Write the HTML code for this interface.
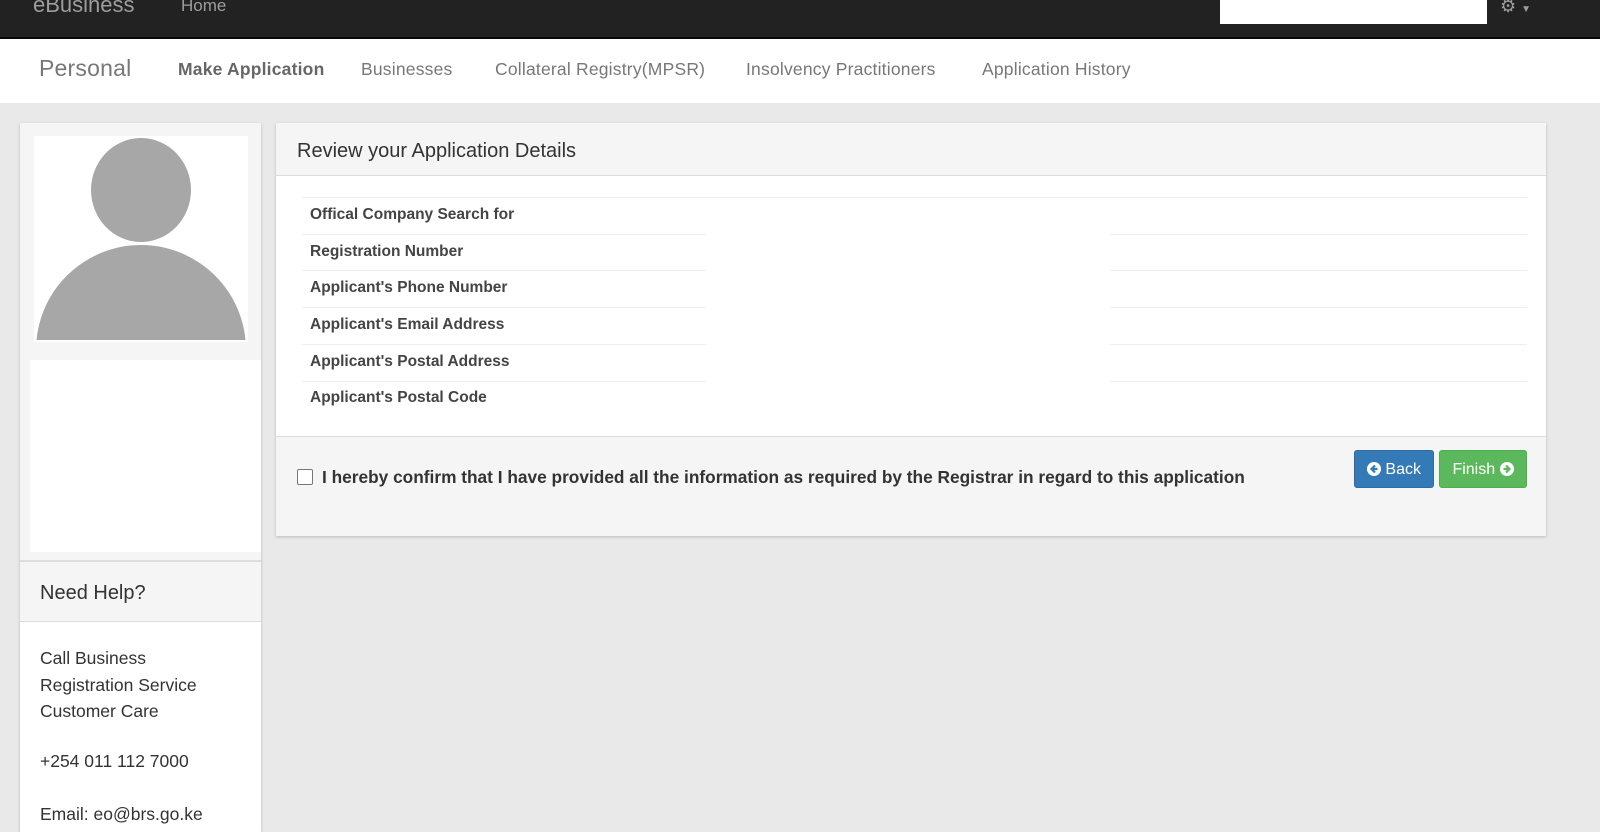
<!DOCTYPE html><html><head><style>
*{margin:0;padding:0;box-sizing:border-box}
body{width:1600px;height:832px;overflow:hidden;background:#e9e9e9;font-family:"Liberation Sans",sans-serif;position:relative;color:#333}
.a{position:absolute;white-space:nowrap}
.top{left:0;top:0;width:1600px;height:39px;background:#222;border-bottom:2px solid #080808}
.nav2{left:0;top:39px;width:1600px;height:64px;background:#fff}
.nav2 span{position:absolute;top:20px;font-size:17.5px;color:#777;letter-spacing:.2px}
.panel{background:#fff;box-shadow:0 1px 3px rgba(0,0,0,.2)}
.lbl{left:310px;font-size:15.5px;font-weight:bold;color:#444}
.line{height:1px;background:#eee}
.btn{border-radius:3px;color:#fff;font-size:16px;text-align:center;line-height:38px;height:38px}
.btn svg{vertical-align:-2px}
</style></head><body>
<div class="a top"></div>
<div class="a" style="left:33px;top:-8px;font-size:22px;color:#9d9d9d">eBusiness</div>
<div class="a" style="left:181px;top:-4px;font-size:17px;color:#9d9d9d">Home</div>
<div class="a" style="left:1220px;top:0;width:267px;height:24px;background:#fff"></div>
<div class="a" style="left:1500px;top:-4px;font-size:18px;color:#9d9d9d">⚙ <span style="font-size:10px">▼</span></div>
<div class="a nav2">
<span style="left:39px;top:16px;font-size:23px;color:#777">Personal</span>
<span style="left:178px;font-weight:bold;color:#666">Make Application</span>
<span style="left:361px">Businesses</span>
<span style="left:495px">Collateral Registry(MPSR)</span>
<span style="left:746px">Insolvency Practitioners</span>
<span style="left:982px">Application History</span>
</div>
<div class="a panel" style="left:20px;top:123px;width:241px;height:709px;background:#fff"></div>
<div class="a" style="left:20px;top:123px;width:241px;height:437px;background:#f5f5f5"></div>
<div class="a" style="left:30px;top:360px;width:231px;height:192px;background:#fff"></div>
<div class="a" style="left:34px;top:136px;width:214px;height:206px;background:#fff;overflow:hidden">
<div class="a" style="left:57px;top:2px;width:100px;height:104px;border-radius:50%;background:#a7a7a7"></div>
<div class="a" style="left:2px;top:109px;width:210px;height:200px;border-radius:105px 105px 0 0;background:#a7a7a7"></div>
<div class="a" style="left:0;top:204px;width:214px;height:2px;background:#fff"></div>
</div>
<div class="a" style="left:20px;top:560px;width:241px;height:2px;background:#ddd"></div>
<div class="a" style="left:20px;top:562px;width:241px;height:60px;background:#f5f5f5;border-bottom:1px solid #ddd"></div>
<div class="a" style="left:40px;top:582px;font-size:20px;color:#333">Need Help?</div>
<div class="a" style="left:40px;top:645px;font-size:17.5px;line-height:26.5px">Call Business<br>Registration Service<br>Customer Care</div>
<div class="a" style="left:40px;top:751px;font-size:17.5px">+254 011 112 7000</div>
<div class="a" style="left:40px;top:804px;font-size:17.5px">Email: eo@brs.go.ke</div>

<div class="a panel" style="left:276px;top:123px;width:1270px;height:413px"></div>
<div class="a" style="left:276px;top:123px;width:1270px;height:53px;background:#f5f5f5;border-bottom:1px solid #ddd"></div>
<div class="a" style="left:297px;top:140px;font-size:20px;color:#333">Review your Application Details</div>
<div class="a line" style="left:302px;top:197px;width:1225px"></div>
<div class="a line" style="left:302px;top:234px;width:404px"></div><div class="a line" style="left:1110px;top:234px;width:417px"></div>
<div class="a line" style="left:302px;top:270px;width:404px"></div><div class="a line" style="left:1110px;top:270px;width:417px"></div>
<div class="a line" style="left:302px;top:307px;width:404px"></div><div class="a line" style="left:1110px;top:307px;width:417px"></div>
<div class="a line" style="left:302px;top:344px;width:404px"></div><div class="a line" style="left:1110px;top:344px;width:417px"></div>
<div class="a line" style="left:302px;top:381px;width:404px"></div><div class="a line" style="left:1110px;top:381px;width:417px"></div>
<div class="a lbl" style="top:206px">Offical Company Search for</div>
<div class="a lbl" style="top:243px">Registration Number</div>
<div class="a lbl" style="top:279px">Applicant's Phone Number</div>
<div class="a lbl" style="top:316px">Applicant's Email Address</div>
<div class="a lbl" style="top:353px">Applicant's Postal Address</div>
<div class="a lbl" style="top:389px">Applicant's Postal Code</div>
<div class="a" style="left:276px;top:436px;width:1270px;height:100px;background:#f5f5f5;border-top:1px solid #ddd"></div>
<div class="a" style="left:297px;top:469px;width:16px;height:16px;border:1px solid #777;border-radius:2px;background:#fff"></div>
<div class="a" style="left:322px;top:467px;font-size:17.3px;font-weight:bold;color:#333">I hereby confirm that I have provided all the information as required by the Registrar in regard to this application</div>
<div class="a btn" style="left:1354px;top:450px;width:80px;background:#337ab7;border:1px solid #2e6da4"><svg width="14" height="14" viewBox="0 0 14 14"><circle cx="7" cy="7" r="7" fill="#fff"/><path d="M8 3.5L4.5 7 8 10.5M4.8 7H10.5" stroke="#337ab7" stroke-width="2.2" fill="none"/></svg> Back</div>
<div class="a btn" style="left:1439px;top:450px;width:88px;background:#5cb85c;border:1px solid #4cae4c">Finish <svg width="14" height="14" viewBox="0 0 14 14"><circle cx="7" cy="7" r="7" fill="#fff"/><path d="M6 3.5L9.5 7 6 10.5M9.2 7H3.5" stroke="#5cb85c" stroke-width="2.2" fill="none"/></svg></div>
</body></html>
